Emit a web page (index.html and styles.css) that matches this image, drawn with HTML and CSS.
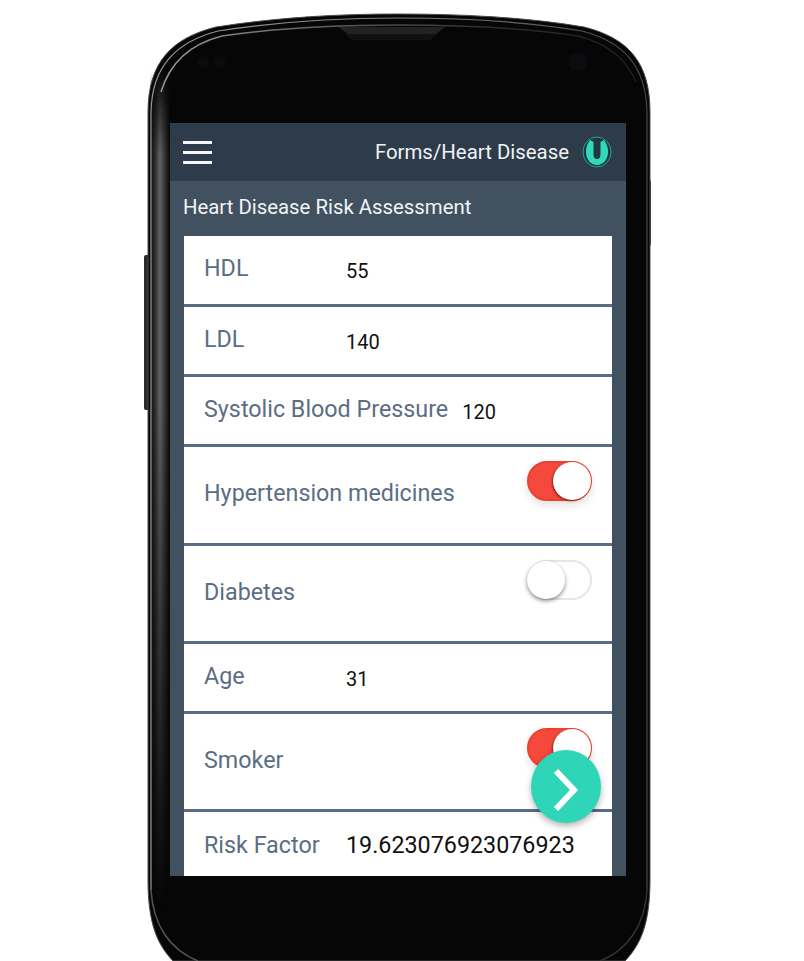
FILE: index.html
```html
<!DOCTYPE html>
<html lang="en">
    <head>
        <title>Heart Disease Risk Assessment</title>
        <meta charset="utf-8" />
        <link rel="stylesheet" href="styles.css">
    </head>
    <body>
        <!-- phone body, drawn on the page canvas -->
        <svg class="phone" width="804" height="961" viewBox="0 0 804 961">
            <defs>
                <linearGradient id="band" x1="0" y1="0" x2="1" y2="0">
                    <stop offset="0" stop-color="#0c0c0c"/>
                    <stop offset="0.22" stop-color="#262626"/>
                    <stop offset="0.5" stop-color="#626262"/>
                    <stop offset="0.75" stop-color="#333"/>
                    <stop offset="1" stop-color="#060606"/>
                </linearGradient>
                <linearGradient id="fade" x1="0" y1="0" x2="0" y2="1">
                    <stop offset="0" stop-color="#fff" stop-opacity="0"/>
                    <stop offset="0.1" stop-color="#fff"/>
                    <stop offset="0.4" stop-color="#fff"/>
                    <stop offset="0.75" stop-color="#fff" stop-opacity="0.4"/>
                    <stop offset="1" stop-color="#fff" stop-opacity="0"/>
                </linearGradient>
                <mask id="bandmask">
                    <rect x="140" y="70" width="40" height="840" fill="url(#fade)"/>
                </mask>
                <linearGradient id="line1" x1="0" y1="0" x2="1" y2="0">
                    <stop offset="0" stop-color="#999"/>
                    <stop offset="0.5" stop-color="#808080"/>
                    <stop offset="0.85" stop-color="#555"/>
                    <stop offset="1" stop-color="#444"/>
                </linearGradient>
                <linearGradient id="line2" x1="0" y1="0" x2="1" y2="0">
                    <stop offset="0" stop-color="#999"/>
                    <stop offset="0.3" stop-color="#666"/>
                    <stop offset="0.7" stop-color="#2c2c2c"/>
                    <stop offset="1" stop-color="#1c1c1c"/>
                </linearGradient>
            </defs>
            <rect x="144" y="255" width="6" height="155" rx="2" fill="#2b2b2b"/>
            <rect x="646" y="180" width="5" height="66" rx="2" fill="#3a3a3a"/>
            <path d="M148 112 C148 62 172 38 216 27 C280 17 340 14 398 14 C460 14 525 17 584 27 C628 38 650 62 650 112 V880 C650 925 640 945 625 961 H173 C158 945 148 925 148 880 Z" fill="#060606" stroke="#4a4a4a" stroke-width="1"/>
            <rect x="150" y="70" width="20" height="840" fill="url(#band)" mask="url(#bandmask)"/>
            <path d="M151 890 V112 C152 66 176 42 218 31 C282 21 340 18 398 18 C460 18 523 21 582 31 C624 42 646 66 647 112 V890" fill="none" stroke="url(#line1)" stroke-width="1.200"/>
            <path d="M161 92 C170 62 190 44 222 36 C284 27 340 25 398 25 C458 25 520 27 578 36 C606 43 626 58 636 82" fill="none" stroke="url(#line2)" stroke-width="1.500"/>
            <path d="M151 890 C153 925 170 950 198 961" fill="none" stroke="#555" stroke-width="1.500"/>
            <path d="M647 890 C645 925 628 950 600 961" fill="none" stroke="#333" stroke-width="1.500"/>
            <path d="M338 27 H445 L436 34 Q392 38 348 34 Z" fill="#222"/>
            <path d="M345 34 H437 L430 40 H352 Z" fill="#111"/>
            <circle cx="578" cy="62" r="10" fill="#0b0b10"/>
            <circle cx="203" cy="62" r="6" fill="#0b0b0b"/>
            <circle cx="220" cy="62" r="6" fill="#0b0b0b"/>
        </svg>

        <div class="screen">
            <div class="topbar">
                <div class="burger"><span></span><span></span><span></span></div>
                <div class="crumb">Forms/Heart Disease</div>
                <svg class="logo" width="30" height="32" viewBox="0 0 30 32">
                    <ellipse cx="15" cy="16" rx="14" ry="15" fill="#20373f" stroke="#2aa595" stroke-width="1"/>
                    <path d="M8 4 Q3.500 10 4 17 C4.500 24 9 29 15 29 C21 29 25.500 24 26 17 Q26.500 10 22 4 L18.500 6 V18 C18.500 21 17.500 23 15 23 C12.500 23 11.500 21 11.500 18 V6 Z" fill="#2fd9b9"/>
                </svg>
            </div>
            <div class="sub">Heart Disease Risk Assessment</div>
            <div class="card">
                <div class="row row-top">
                    <span class="lbl lbl-w">HDL</span><span class="val">55</span>
                </div>
                <div class="row">
                    <span class="lbl lbl-w">LDL</span><span class="val">140</span>
                </div>
                <div class="row">
                    <span class="lbl">Systolic Blood Pressure</span><span class="val val-near">120</span>
                </div>
                <div class="row row-tall row-first-tall">
                    <span class="lbl">Hypertension medicines</span>
                    <span class="toggle on"></span>
                </div>
                <div class="row row-tall">
                    <span class="lbl">Diabetes</span>
                    <span class="toggle"></span>
                </div>
                <div class="row">
                    <span class="lbl lbl-w">Age</span><span class="val">31</span>
                </div>
                <div class="row row-tall">
                    <span class="lbl">Smoker</span>
                    <span class="toggle on"></span>
                </div>
                <div class="row row-last">
                    <span class="lbl lbl-w">Risk Factor</span><span class="val val-big">19.623076923076923</span>
                </div>
            </div>
            <div class="fab">
                <svg width="26" height="44" viewBox="0 0 26 44">
                    <path d="M3 3 L21 22 L3 41" fill="none" stroke="#fff" stroke-width="6"/>
                </svg>
            </div>
        </div>
    </body>
</html>
```

FILE: styles.css
```css
body {
    margin: 0;
    width: 804px;
    height: 961px;
    overflow: hidden;
    position: relative;
    background-color: #fff;
    font-family: Roboto, "Liberation Sans", sans-serif;
}
.phone {
    position: absolute;
    left: 0;
    top: 0;
}

/* the app inside the phone */
.screen {
    position: absolute;
    left: 170px;
    top: 123px;
    width: 456px;
    height: 753px;
    overflow: hidden;
    background-color: #41515f;
}
.topbar {
    height: 58px;
    display: flex;
    align-items: center;
    padding: 0 14px 0 13px;
    background-color: #2d3b4a;
}
.burger {
    width: 29px;
    flex: none;
    display: flex;
    flex-direction: column;
    gap: 7px;
    margin-right: auto;
}
.burger span {
    display: block;
    height: 3px;
    background-color: #f4f6f7;
}
.crumb {
    font-size: 20.4px;
    color: #f0f3f4;
    margin-right: 13px;
}
.sub {
    height: 55px;
    box-sizing: border-box;
    padding: 14px 0 0 13px;
    font-size: 20.35px;
    line-height: 24px;
    color: #f2f4f5;
}
.card {
    margin: 0 14px;
    background-color: #fff;
}
.row {
    height: 70px;
    display: flex;
    align-items: center;
    box-sizing: border-box;
    padding: 0 20px;
    border-bottom: 3px solid #5a6d86;
    position: relative;
}
.row-top {
    height: 71px;
}
.row-tall {
    height: 98px;
    justify-content: space-between;
}
.row-first-tall {
    height: 99px;
}
.row-last {
    height: 65px;
    border-bottom: none;
}
.lbl {
    font-size: 23.3px;
    color: #5b6d84;
    position: relative;
    top: -2px;
}
.row-last .lbl {
    top: 0;
}
.lbl-w {
    width: 142px;
    flex: none;
}
.val {
    font-size: 20px;
    color: #111;
    position: relative;
    top: 1px;
}
.val-near {
    margin-left: 14px;
}
.val-big {
    font-size: 23.3px;
    top: 0;
}

/* toggle switches */
.toggle {
    width: 65px;
    height: 40px;
    box-sizing: border-box;
    border-radius: 20px;
    border: 2px solid #e6e6e6;
    background-color: #fff;
    position: relative;
    top: -14px;
}
.toggle::after {
    content: "";
    position: absolute;
    left: -2px;
    top: -1px;
    width: 38px;
    height: 38px;
    border-radius: 50%;
    background-color: #fff;
    box-shadow: 0 2px 4px rgba(0, 0, 0, 0.45);
}
.toggle.on {
    border-color: #e8432f;
    background-color: #f4493c;
    box-shadow: 0 4px 8px rgba(0, 0, 0, 0.12);
}
.toggle.on::after {
    left: auto;
    right: -1px;
    box-shadow: -1px 1px 2px rgba(120, 20, 10, 0.8);
}

.fab {
    position: absolute;
    left: 361px;
    top: 627px;
    width: 70px;
    height: 73px;
    box-sizing: border-box;
    padding-top: 7px;
    border-radius: 50%;
    background-color: #2fd5b7;
    box-shadow: 0 3px 6px rgba(0, 0, 0, 0.3);
    display: flex;
    align-items: center;
    justify-content: center;
}
```
